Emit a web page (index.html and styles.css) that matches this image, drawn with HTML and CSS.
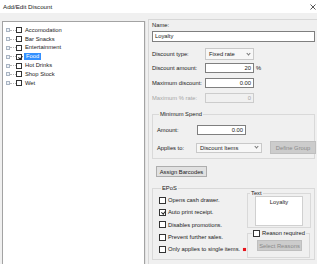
FILE: index.html
```html
<!DOCTYPE html>
<html lang="en">
<head>
  <meta charset="UTF-8" />
  <title>Add/Edit Discount</title>
  <link rel="stylesheet" href="styles.css">
</head>
<body>
  <div class="window">
    <div class="titlebar">
      <span class="title">Add/Edit Discount</span>
      <svg class="close" width="6" height="6" viewBox="0 0 6 6">
        <path d="M0.5 0.5 L5.5 5.5 M5.5 0.5 L0.5 5.5" stroke="#444" stroke-width="0.9" fill="none" />
      </svg>
    </div>

    <div class="content">
      <div class="tree">
        <div class="node"><span class="expander"></span><span class="branch"></span><span class="tick"></span><span class="node-text">Accomodation</span></div>
        <div class="node"><span class="expander"></span><span class="branch"></span><span class="tick"></span><span class="node-text">Bar Snacks</span></div>
        <div class="node"><span class="expander"></span><span class="branch"></span><span class="tick"></span><span class="node-text">Entertainment</span></div>
        <div class="node"><span class="expander"></span><span class="branch"></span><span class="tick checked"></span><span class="node-text selected">Food</span></div>
        <div class="node"><span class="expander"></span><span class="branch"></span><span class="tick"></span><span class="node-text">Hot Drinks</span></div>
        <div class="node"><span class="expander"></span><span class="branch"></span><span class="tick"></span><span class="node-text">Shop Stock</span></div>
        <div class="node"><span class="expander"></span><span class="branch"></span><span class="tick"></span><span class="node-text">Wet</span></div>
      </div>

      <div class="panel">
        <div class="name-label">Name:</div>
        <div class="textbox name-box">Loyalty</div>

        <div class="form-row type-row">
          <span>Discount type:</span>
          <div class="combo type-combo">Fixed rate<span class="chevron"></span></div>
        </div>
        <div class="form-row amount-row">
          <span>Discount amount:</span>
          <div class="textbox num">20</div>
          <span class="percent">%</span>
        </div>
        <div class="form-row max-row">
          <span>Maximum discount:</span>
          <div class="textbox num">0.00</div>
        </div>
        <div class="form-row max-row disabled">
          <span>Maximum % rate:</span>
          <div class="textbox num">0</div>
        </div>

        <fieldset class="group spend">
          <legend>Minimum Spend</legend>
          <div class="spend-row first">
            <span>Amount:</span>
            <div class="textbox num spend-amount">0.00</div>
          </div>
          <div class="spend-row">
            <span>Applies to:</span>
            <div class="combo applies-combo">Discount Items<span class="chevron"></span></div>
            <div class="button off define">Define Group</div>
          </div>
        </fieldset>

        <div class="button barcodes">Assign Barcodes</div>

        <fieldset class="group epos">
          <legend>EPoS</legend>
          <div class="epos-body">
            <div class="options">
              <div class="option"><span class="tick big"></span>Opens cash drawer.</div>
              <div class="option"><span class="tick big checked"></span>Auto print receipt.</div>
              <div class="option"><span class="tick big"></span>Disables promotions.</div>
              <div class="option"><span class="tick big"></span>Prevent further sales.</div>
              <div class="option"><span class="tick big"></span>Only applies to single items.<span class="required"></span></div>
            </div>
            <div class="side">
              <fieldset class="group text-group">
                <legend>Text</legend>
                <div class="text-area">Loyalty</div>
              </fieldset>
              <fieldset class="group reason-group">
                <legend><span class="tick big"></span>Reason required</legend>
                <div class="button off reasons">Select Reasons</div>
              </fieldset>
            </div>
          </div>
        </fieldset>
      </div>
    </div>
  </div>
</body>
</html>
```

FILE: styles.css
```css
* {
  box-sizing: border-box;
}

html, body {
  margin: 0;
  overflow: hidden;
}

body {
  width: 317px;
  height: 264px;
  background: #f0f0f0;
  font-family: 'Liberation Sans', Arial, sans-serif;
  font-size: 5.8px;
  color: #1a1a1a;
}

.window {
  width: 322px;
  height: 264px;
  overflow: hidden;
}

.titlebar {
  height: 13px;
  background: #fff;
  display: flex;
  align-items: center;
  justify-content: space-between;
  padding: 0 6px 0 3px;
  font-size: 6.2px;
}

.content {
  display: flex;
  align-items: flex-start;
  padding: 6px 0 0 2px;
}

/* category tree */
.tree {
  flex-shrink: 0;
  width: 143px;
  height: 243px;
  margin-top: 2px;
  background: #fff;
  border: 1px solid #a3a3a3;
  border-bottom: none;
  box-shadow: 1px 0 0 #e3e3e3;
  padding-top: 4px;
}

.node {
  display: flex;
  align-items: center;
  height: 8.8px;
  padding-left: 3px;
}

.expander {
  width: 4px;
  height: 4px;
  border: 1px solid #a9b4c2;
  background: #eef2f7;
}

.branch {
  width: 6px;
  border-top: 1px dotted #b5b5b5;
}

.tick {
  width: 6px;
  height: 6px;
  border: 1px solid #333;
  background: #fff;
  position: relative;
  flex-shrink: 0;
}

.tick.big {
  width: 7px;
  height: 7px;
}

.tick.checked::after {
  content: "";
  position: absolute;
  left: 1.5px;
  top: 0;
  width: 1.5px;
  height: 3px;
  border: solid #222;
  border-width: 0 1px 1px 0;
  transform: rotate(40deg);
}

.node-text {
  margin-left: 2px;
  padding: 0 1px;
  line-height: 7px;
}

.node-text.selected {
  background: #3390ff;
  color: #fff;
  padding: 0 2px;
}

/* right side */
.panel {
  flex: 1;
  min-width: 0;
  height: 245px;
  margin-left: 3px;
  border: 1px solid #d7d7d7;
  border-bottom: none;
  padding: 0 6px 0 3px;
}

.name-label {
  margin-top: 1px;
  line-height: 8px;
}

.textbox {
  height: 10px;
  border: 1px solid #7f7f7f;
  background: #fff;
  line-height: 8px;
  padding: 0 2px;
}

.name-box {
  height: 11px;
  line-height: 9px;
  margin-top: 2px;
}

.num {
  text-align: right;
  width: 49px;
}

.form-row {
  display: grid;
  grid-template-columns: 53px 49px auto;
  align-items: center;
  margin-top: 5px;
}

.type-row {
  margin-top: 6px;
}

.amount-row {
  margin-top: 3px;
}

.percent {
  margin-left: 2px;
}

.disabled {
  color: #a6a6a6;
}

.disabled .textbox {
  border-color: #cccccc;
  background: #f0f0f0;
}

.combo {
  height: 12px;
  border: 1px solid #c9c9c9;
  background: #f7f7f7;
  display: flex;
  align-items: center;
  justify-content: space-between;
  padding: 0 3px;
}

.chevron {
  width: 3px;
  height: 3px;
  border: solid #777;
  border-width: 0 1px 1px 0;
  transform: rotate(45deg);
  margin-top: -2px;
}

/* group boxes */
.group {
  margin: 0;
  padding: 0 4px;
  border: 1px solid #d9d9d9;
  min-width: 0;
}

.group legend {
  padding: 0 1px;
  margin-left: 2px;
  line-height: 8px;
  white-space: nowrap;
}

.spend {
  margin-top: 7px;
  padding-bottom: 4px;
}

.spend-row {
  display: grid;
  grid-template-columns: 31px 66px 46px;
  column-gap: 8px;
  align-items: center;
  margin-top: 6px;
}

.spend-row.first {
  grid-template-columns: 31px 49px;
  margin-top: 7px;
}

.spend-amount {
  margin-left: 1px;
}

.applies-combo {
  height: 10px;
}

.button {
  height: 11px;
  border: 1px solid #adadad;
  background: #e1e1e1;
  display: flex;
  align-items: center;
  justify-content: center;
  white-space: nowrap;
}

.button.off {
  background: #cccccc;
  border-color: #bfbfbf;
  color: #8a8a8a;
}

.define {
  height: 13px;
}

.barcodes {
  width: 51px;
  margin: 7px 0 0 4px;
}

.epos {
  margin-top: 7px;
  padding: 0 3px 1px 6px;
}

.epos-body {
  display: flex;
}

.options {
  padding-top: 2px;
}

.option {
  display: flex;
  align-items: center;
  height: 12.3px;
  white-space: nowrap;
}

.option .tick {
  margin-right: 2px;
}

.required {
  width: 3px;
  height: 3px;
  background: #e8141c;
  box-shadow: 0 0 1px #ff6b6b;
  margin-left: 3px;
}

.side {
  margin-left: auto;
  width: 64px;
  flex-shrink: 0;
  margin-top: -3px;
}

.text-group {
  height: 39px;
  padding: 0 7px;
}

.text-group legend {
  margin-left: -5px;
}

.text-area {
  background: #fff;
  border: 1px solid #d0d0d0;
  height: 30px;
  text-align: center;
  padding-top: 2px;
  margin-top: -1px;
}

.reason-group {
  margin-top: 1px;
  width: 63px;
  padding: 0 8px 6px 9px;
}

.reason-group legend {
  display: flex;
  align-items: center;
  margin-left: -5px;
}

.reason-group legend .tick {
  margin-right: 2px;
}

.reasons {
  margin-top: 3px;
  width: 45px;
}
```
